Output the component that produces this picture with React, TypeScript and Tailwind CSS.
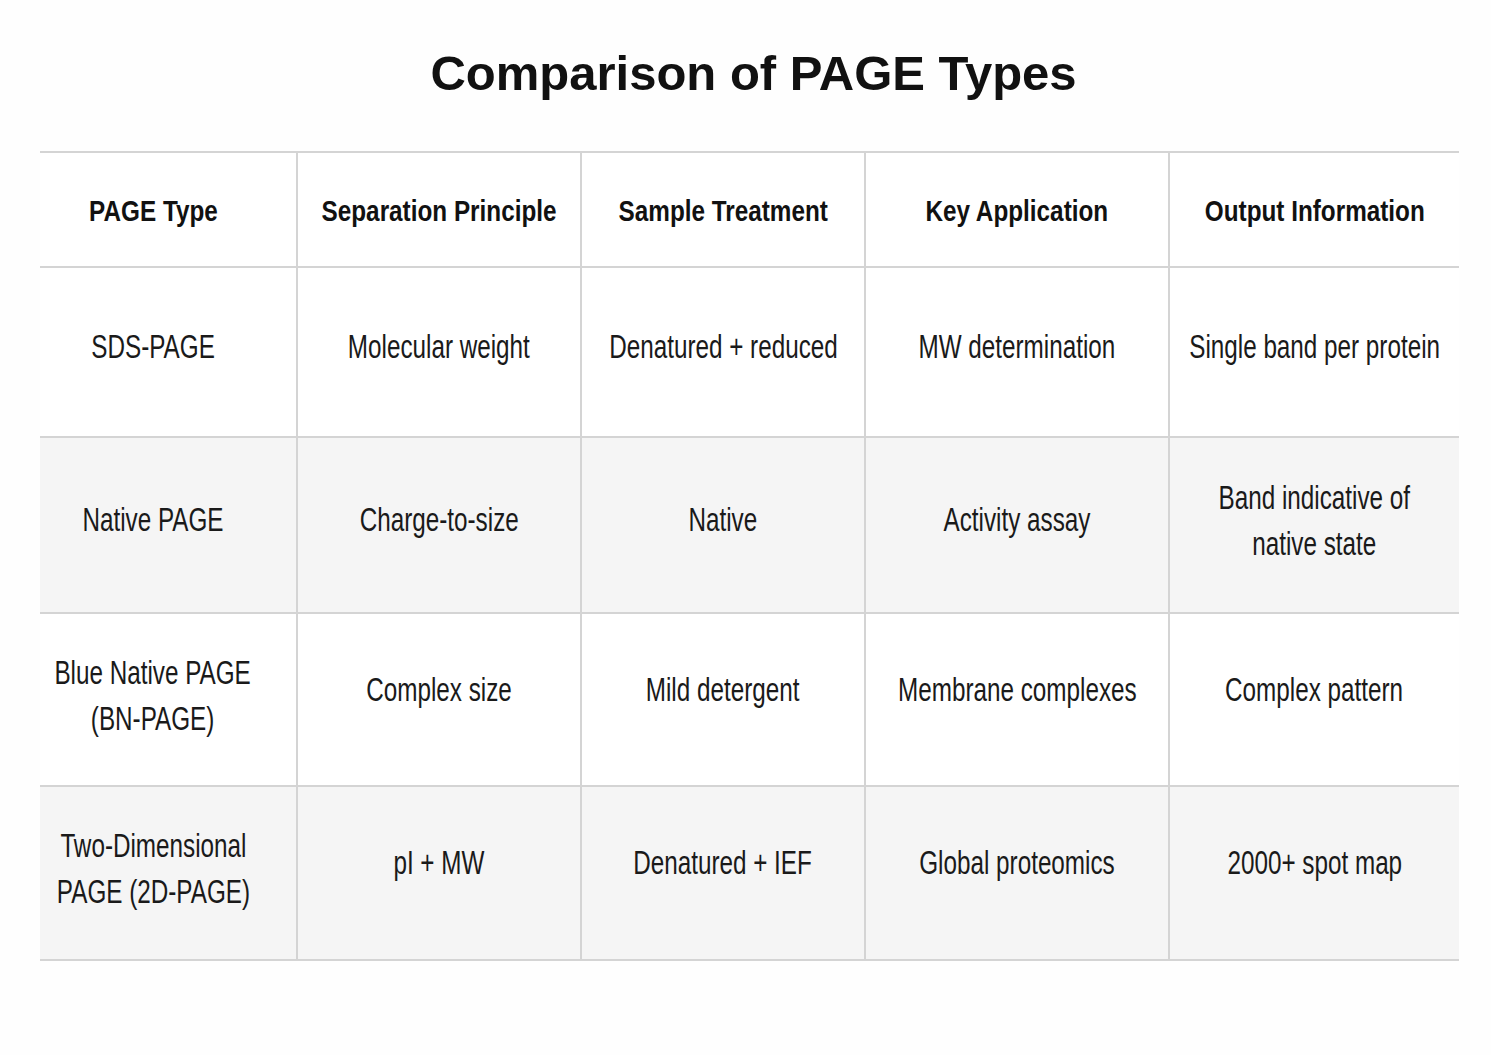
const rows = [
  {
    bg: 'bg-white',
    h: 'h-[170px]',
    pad: 'pb-[10px]',
    cells: [['SDS-PAGE'], ['Molecular weight'], ['Denatured + reduced'], ['MW determination'], ['Single band per protein']],
  },
  {
    bg: 'bg-[#f5f5f5]',
    h: 'h-[176px]',
    pad: 'pb-[10px]',
    cells: [['Native PAGE'], ['Charge-to-size'], ['Native'], ['Activity assay'], ['Band indicative of', 'native state']],
  },
  {
    bg: 'bg-white',
    h: 'h-[173px]',
    pad: 'pb-[20px]',
    cells: [['Blue Native PAGE', '(BN-PAGE)'], ['Complex size'], ['Mild detergent'], ['Membrane complexes'], ['Complex pattern']],
  },
  {
    bg: 'bg-[#f5f5f5]',
    h: 'h-[174px]',
    pad: 'pb-[20px]',
    cells: [['Two-Dimensional', 'PAGE (2D-PAGE)'], ['pI + MW'], ['Denatured + IEF'], ['Global proteomics'], ['2000+ spot map']],
  },
];

const headers = ['PAGE Type', 'Separation Principle', 'Sample Treatment', 'Key Application', 'Output Information'];

const cols = 'grid grid-cols-[256px_284px_284px_304px_291px]';

function Cell({ lines, first, bold, pad }: { lines: string[]; first: boolean; bold?: boolean; pad?: string }) {
  // two-line cells sit closer to the middle than single ones
  const p = bold ? 'pt-[2px]' : lines.length > 1 ? 'pb-[8px]' : pad;
  return (
    <div
      className={`flex items-center justify-center text-center whitespace-nowrap ${
        first ? 'pr-[30px]' : 'border-l-2 border-[#d4d4d4]'
      } ${p}`}
    >
      <div
        className={
          bold
            ? 'font-bold text-[30px] leading-[40px] scale-x-[0.81] text-[#111]'
            : 'text-[33px] leading-[46px] scale-x-[0.735] text-[#1a1a1a]'
        }
      >
        {lines.map((l) => (
          <div key={l}>{l}</div>
        ))}
      </div>
    </div>
  );
}

export default function App() {
  return (
    <div className="w-[1491px] h-[1055px] bg-[#fefefe] text-[#111] overflow-hidden font-['Liberation_Sans',Arial,sans-serif]">
      <h1 className="pt-[40px] h-[151px] pl-[16px] text-center text-[49px] leading-[66px] font-bold">
        Comparison of PAGE Types
      </h1>

      <div className="ml-[40px] w-[1419px] border-b-2 border-[#d4d4d4]">
        {/* header */}
        <div className={`${cols} h-[115px] border-t-2 border-[#d4d4d4] bg-white`}>
          {headers.map((h, i) => (
            <Cell key={h} lines={[h]} first={i === 0} bold />
          ))}
        </div>

        {rows.map((r, ri) => (
          <div key={ri} className={`${cols} ${r.h} border-t-2 border-[#d4d4d4] ${r.bg}`}>
            {r.cells.map((c, i) => (
              <Cell key={i} lines={c} first={i === 0} pad={r.pad} />
            ))}
          </div>
        ))}
      </div>
    </div>
  );
}
